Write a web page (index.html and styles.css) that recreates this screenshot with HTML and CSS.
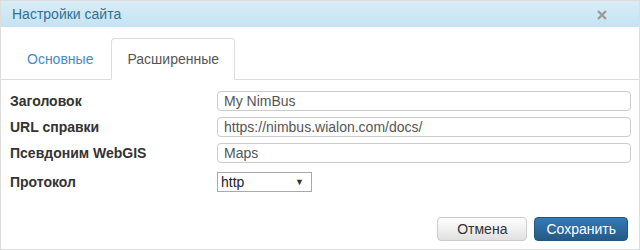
FILE: index.html
```html
<!DOCTYPE html>
<html lang="ru">
<head>
    <meta charset="UTF-8">
    <title>Настройки сайта</title>
    <link rel="stylesheet" href="styles.css">
</head>
<body>

<div class="dialog">
    <div class="dialog-header">
        <span class="dialog-title">Настройки сайта</span>
        <span class="close">
            <svg width="10" height="10" viewBox="0 0 10 10">
                <path d="M1 1 L9 9 M9 1 L1 9" stroke="#9a9a9a" stroke-width="2.4" stroke-linecap="butt"/>
            </svg>
        </span>
    </div>

    <ul class="tabs">
        <li><a href="#">Основные</a></li>
        <li class="active"><a href="#">Расширенные</a></li>
    </ul>

    <!-- Advanced settings -->
    <form class="settings">
        <label>Заголовок</label>
        <input type="text" value="My NimBus">
        <label>URL справки</label>
        <input type="text" value="https://nimbus.wialon.com/docs/">
        <label>Псевдоним WebGIS</label>
        <input type="text" value="Maps">
        <label class="select-label">Протокол</label>
        <div class="select">
            <span>http</span>
            <span class="arrow">&#9660;</span>
        </div>
    </form>

    <div class="actions">
        <button class="btn">Отмена</button>
        <button class="btn btn-primary">Сохранить</button>
    </div>
</div>

</body>
</html>
```

FILE: styles.css
```css
body {
    margin: 0;
    font-family: 'Liberation Sans', Arial, sans-serif;
    color: #333;
    background-color: #fff;
}
.dialog {
    width: 640px;
    height: 250px;
    box-sizing: border-box;
    border: 1px solid #ddd;
    background-color: #fff;
}
.dialog-header {
    display: flex;
    justify-content: space-between;
    align-items: center;
    height: 26px;
    padding: 0 32px 0 11px;
    background: linear-gradient(to bottom, #d9edf7, #c4e3f3);
}
.dialog-title {
    font-size: 14px;
    color: #31708f;
}
.close {
    display: flex;
    margin-top: 1px;
}
.tabs {
    display: flex;
    list-style: none;
    margin: 11px 0 0 0;
    padding: 0 0 0 10px;
    border-bottom: 1px solid #ddd;
}
.tabs li {
    margin-bottom: -1px;
}
.tabs a {
    display: block;
    margin-right: 2px;
    padding: 10px 15px;
    line-height: 20px;
    font-size: 14px;
    color: #428bca;
    text-decoration: none;
    border: 1px solid transparent;
    border-radius: 4px 4px 0 0;
}
.tabs .active a {
    color: #555;
    background-color: #fff;
    border-color: #ddd #ddd transparent;
}
.settings {
    display: grid;
    grid-template-columns: 207px 1fr;
    row-gap: 6px;
    align-items: center;
    padding: 11px 8px 0 9px;
}
.settings label {
    font-size: 14px;
    font-weight: bold;
    color: #333;
}
.settings input {
    height: 20px;
    box-sizing: border-box;
    padding: 0 6px;
    font-family: inherit;
    font-size: 14px;
    color: #555;
    border: 1px solid #ccc;
    border-radius: 4px;
    outline: none;
}
.select-label {
    margin-top: 3px;
}
.select {
    display: flex;
    justify-content: space-between;
    align-items: center;
    width: 95px;
    height: 20px;
    box-sizing: border-box;
    margin-top: 3px;
    padding: 0 7px 0 3px;
    font-size: 14px;
    color: #222;
    border: 1px solid #a9a9a9;
}
.select .arrow {
    font-size: 9px;
    color: #333;
}
.actions {
    display: flex;
    justify-content: flex-end;
    gap: 7px;
    padding: 25px 11px 0 0;
}
.btn {
    height: 24px;
    padding: 0 19px;
    font-family: inherit;
    font-size: 14px;
    color: #333;
    background: linear-gradient(to bottom, #fff, #e0e0e0);
    border: 1px solid #ccc;
    border-radius: 4px;
}
.btn-primary {
    padding: 0 11px;
    color: #fff;
    background: linear-gradient(to bottom, #337ab7, #265a88);
    border-color: #245580;
}
```
